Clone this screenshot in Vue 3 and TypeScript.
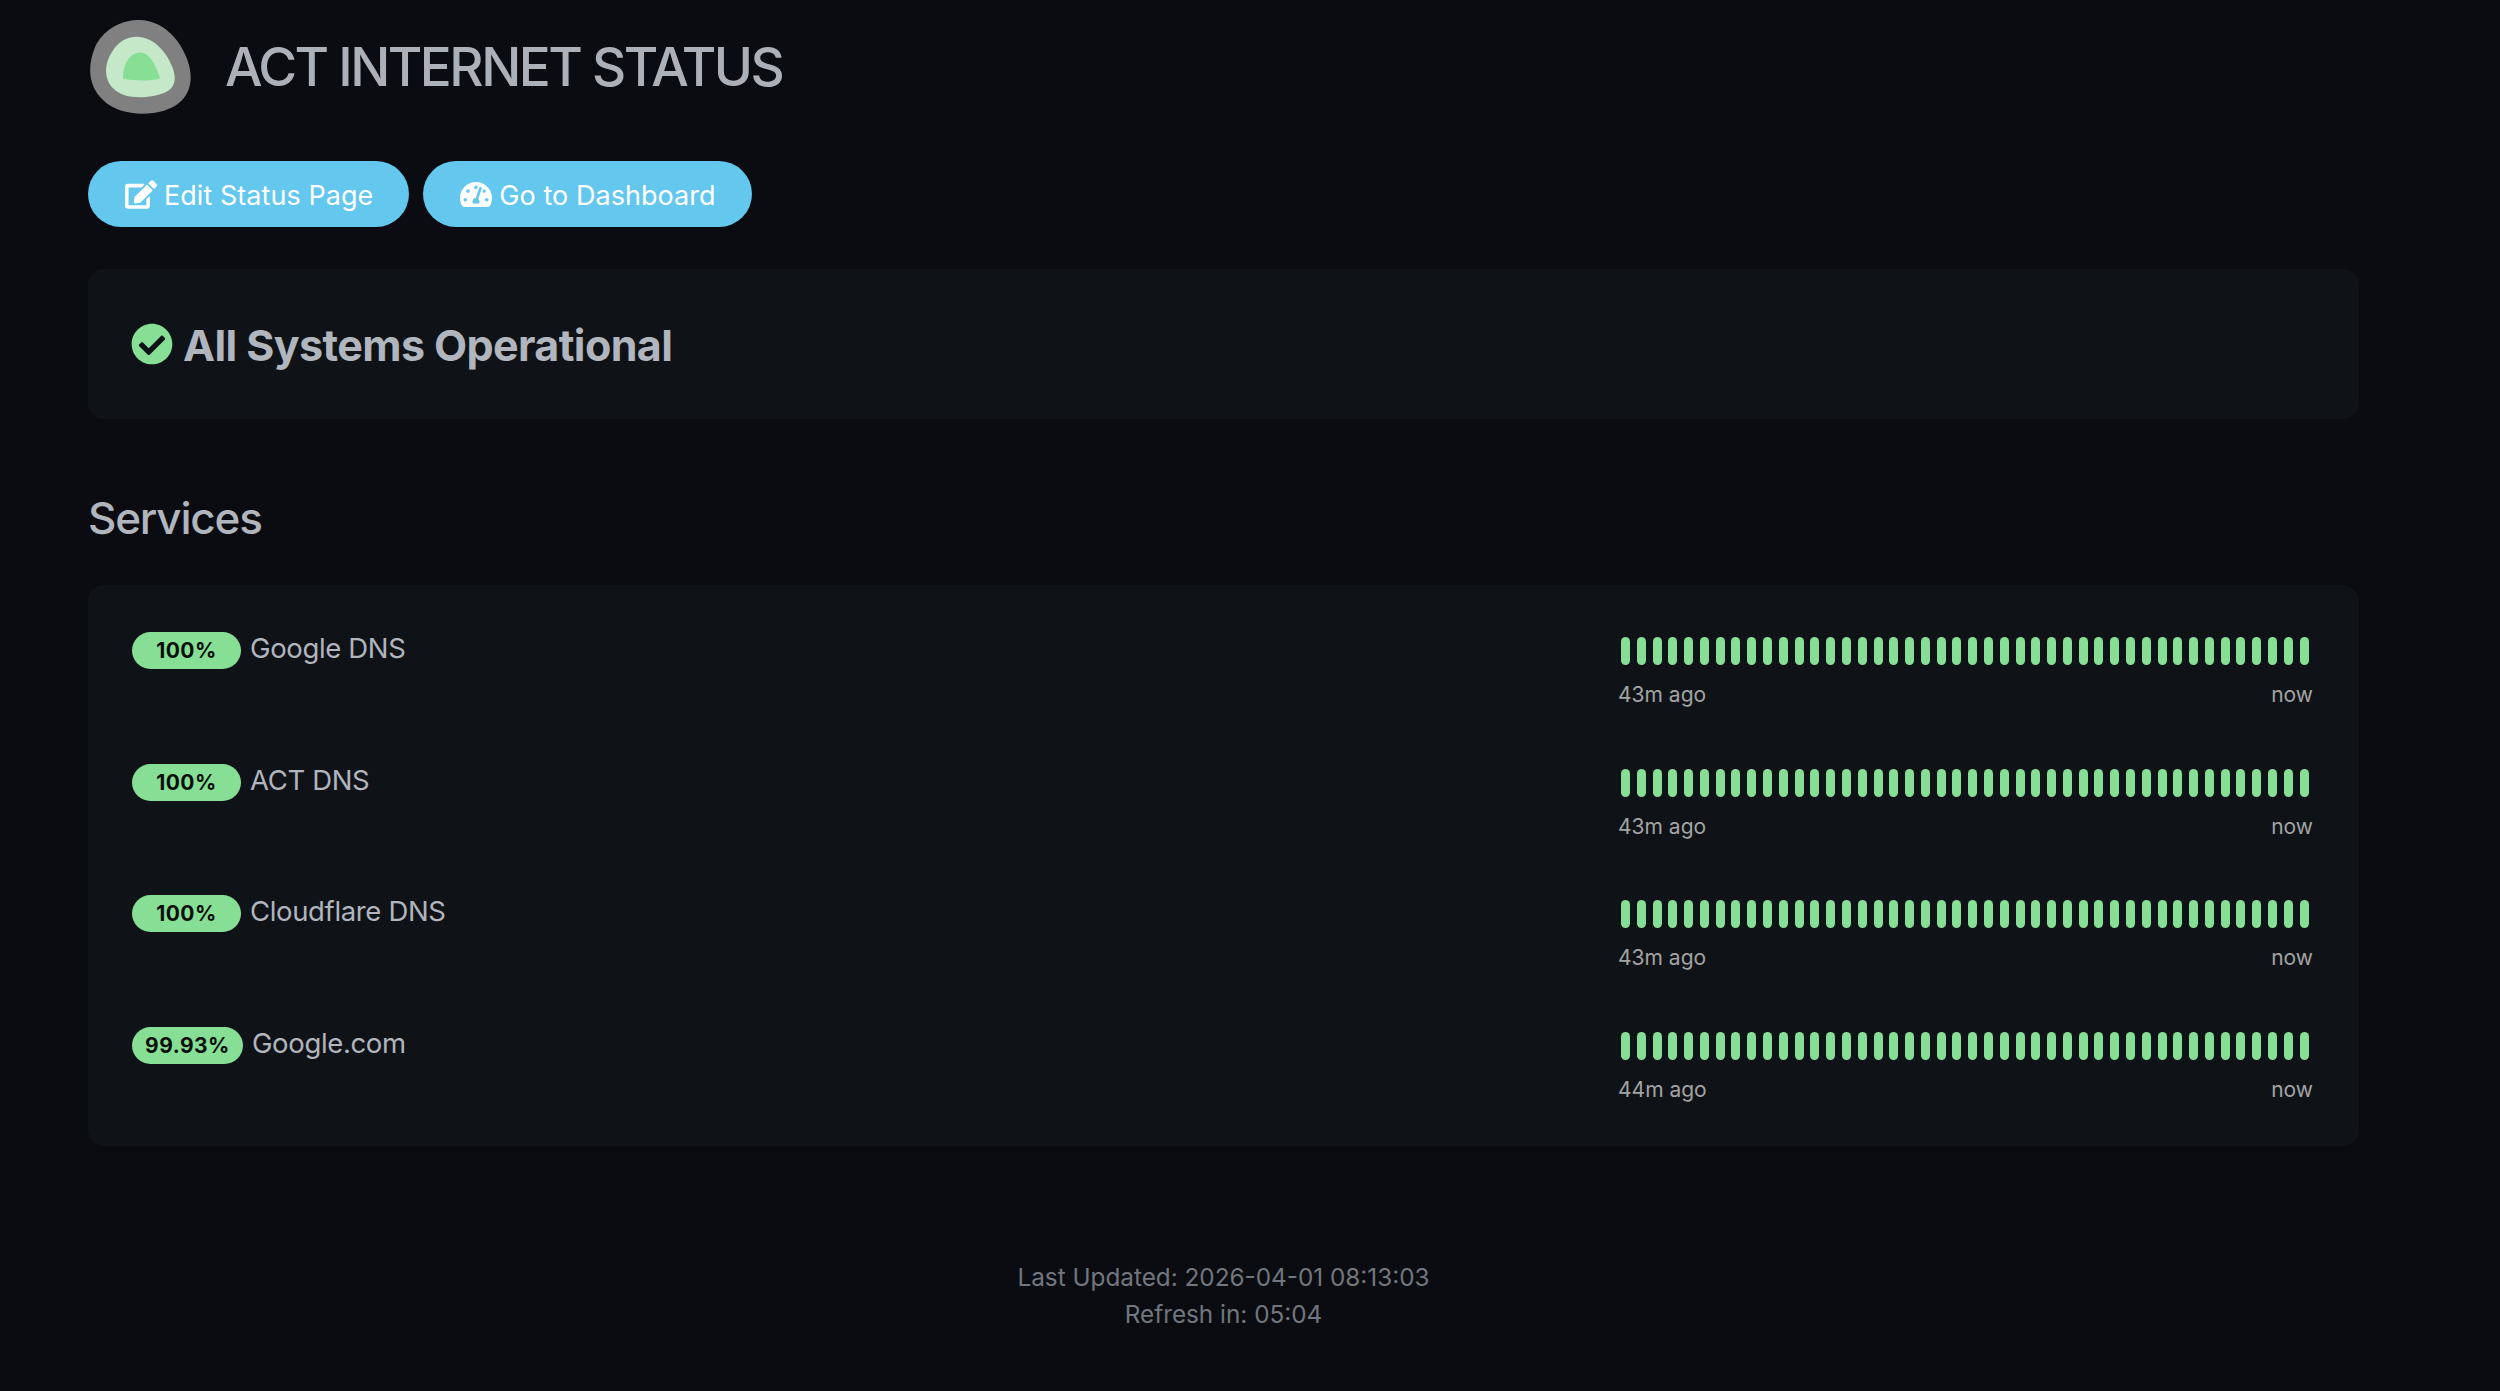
<script setup lang="ts">
interface Service {
  name: string;
  uptime: string;
  since: string;
}

const services: Service[] = [
  { name: 'Google DNS', uptime: '100%', since: '43m ago' },
  { name: 'ACT DNS', uptime: '100%', since: '43m ago' },
  { name: 'Cloudflare DNS', uptime: '100%', since: '43m ago' },
  { name: 'Google.com', uptime: '99.93%', since: '44m ago' },
];

const beatCount = 44;
</script>

<template>
  <div class="page">
    <header class="title-row">
      <svg class="logo" viewBox="30 30 303 280">
        <path fill="#808080" d="M170 30C240 28 295 80 320 150C345 220 320 280 250 300C190 318 110 310 70 270C25 230 20 170 45 110C65 65 115 32 170 30Z" />
        <path fill="#c5e8c9" d="M165 80C215 78 255 120 275 170C295 225 270 245 225 255C180 265 125 262 100 235C70 205 72 160 95 125C115 95 135 82 165 80Z" />
        <path fill="#87df95" d="M180 127C205 127 225 160 238 204C205 212 165 212 128 205C127 165 145 128 180 127Z" />
      </svg>
      <h1 class="title">ACT INTERNET STATUS</h1>
    </header>

    <div class="actions">
      <button class="btn">
        <svg class="btn-icon" viewBox="0 0 576 512">
          <path fill="currentColor" d="M402.6 83.2l90.2 90.2c3.8 3.8 3.8 10 0 13.8L274.4 405.6l-92.8 10.3c-12.4 1.4-22.9-9.1-21.5-21.5l10.3-92.8L388.8 83.2c3.8-3.8 10-3.8 13.8 0zm162-22.9l-48.8-48.8c-15.2-15.2-39.9-15.2-55.2 0l-35.4 35.4c-3.8 3.8-3.8 10 0 13.8l90.2 90.2c3.8 3.8 10 3.8 13.8 0l35.4-35.4c15.2-15.3 15.2-40 0-55.2zM384 346.2V448H64V128h229.8c3.2 0 6.2-1.3 8.5-3.5l40-40c7.6-7.6 2.2-20.5-8.5-20.5H48C21.5 64 0 85.5 0 112v352c0 26.5 21.5 48 48 48h352c26.5 0 48-21.5 48-48V306.2c0-10.7-12.9-16-20.5-8.5l-40 40c-2.2 2.3-3.5 5.3-3.5 8.5z" />
        </svg>
        Edit Status Page
      </button>
      <button class="btn">
        <svg class="btn-icon" viewBox="0 0 576 512">
          <path fill="currentColor" d="M288 32C128.94 32 0 160.94 0 320c0 52.8 14.25 102.26 39.06 144.8 5.61 9.62 16.3 15.2 27.44 15.2h443c11.14 0 21.83-5.58 27.44-15.2C561.75 422.26 576 372.8 576 320c0-159.06-128.94-288-288-288zm0 64c14.71 0 26.58 10.13 30.32 23.65-1.11 2.26-2.64 4.23-3.45 6.67l-9.22 27.67c-5.13 3.49-10.97 6.01-17.64 6.01-17.67 0-32-14.33-32-32S270.33 96 288 96zM96 384c-17.67 0-32-14.33-32-32s14.33-32 32-32 32 14.33 32 32-14.33 32-32 32zm48-160c-17.67 0-32-14.33-32-32s14.33-32 32-32 32 14.33 32 32-14.33 32-32 32zm246.77-72.41l-61.33 184C343.13 347.33 352 364.54 352 384c0 11.72-3.38 22.55-8.88 32H232.88c-5.5-9.45-8.88-20.28-8.88-32 0-33.94 26.5-61.43 59.9-63.59l61.34-184.01c4.17-12.56 17.73-19.45 30.36-15.17 12.57 4.19 19.35 17.77 15.17 30.36zm14.66 57.2l15.52-46.55c3.47-1.29 7.13-2.23 11.05-2.23 17.67 0 32 14.33 32 32s-14.33 32-32 32c-11.38-.01-20.89-6.28-26.57-15.22zM480 384c-17.67 0-32-14.33-32-32s14.33-32 32-32 32 14.33 32 32-14.33 32-32 32z" />
        </svg>
        Go to Dashboard
      </button>
    </div>

    <section class="card overall">
      <svg class="ok-icon" viewBox="0 0 512 512">
        <path fill="#87df95" d="M504 256c0 136.967-111.033 248-248 248S8 392.967 8 256 119.033 8 256 8s248 111.033 248 248zM227.314 387.314l184-184c6.248-6.248 6.248-16.379 0-22.627l-22.627-22.627c-6.248-6.249-16.379-6.249-22.628 0L216 308.118l-70.059-70.059c-6.248-6.248-16.379-6.248-22.628 0l-22.627 22.627c-6.248 6.248-6.248 16.379 0 22.627l104 104c6.249 6.249 16.379 6.249 22.628.001z" />
      </svg>
      <span class="overall-text">All Systems Operational</span>
    </section>

    <h2 class="section-title">Services</h2>

    <section class="card services">
      <div v-for="s in services" :key="s.name" class="row">
        <div class="info">
          <span class="badge">{{ s.uptime }}</span>
          <span class="name">{{ s.name }}</span>
        </div>
        <div class="history">
          <div class="beats">
            <span v-for="n in beatCount" :key="n" class="beat"></span>
          </div>
          <div class="times">
            <span>{{ s.since }}</span>
            <span>now</span>
          </div>
        </div>
      </div>
    </section>

    <footer class="footer">
      <div>Last Updated: 2026-04-01 08:13:03</div>
      <div>Refresh in: 05:04</div>
    </footer>
  </div>
</template>

<style>
html,
body {
  margin: 0;
  background: #0a0c11;
}
</style>

<style scoped>
.page {
  box-sizing: border-box;
  width: 2500px;
  height: 1391px;
  overflow: hidden;
  padding: 20px 141px 0 88px;
  background: #0a0c11;
  color: #b1b5bd;
  font-family: Inter, "Liberation Sans", sans-serif;
}

.title-row {
  display: flex;
  align-items: center;
  height: 93px;
}

.logo {
  flex: none;
  width: 102px;
  height: 94px;
  margin-left: 2px;
}

.title {
  margin: 2px 0 0 33px;
  font-size: 53px;
  font-weight: 500;
  line-height: 1;
  letter-spacing: -2.5px;
  color: #acb0b9;
}

.actions {
  display: flex;
  gap: 14px;
  margin-top: 48px;
}

.btn {
  display: flex;
  align-items: center;
  gap: 7px;
  height: 66px;
  padding: 2px 36px 0 37px;
  border: 0;
  border-radius: 33px;
  background: #63c7ee;
  color: #fff;
  font-family: inherit;
  font-size: 27px;
  letter-spacing: 0.05px;
}

.btn-icon {
  width: 32px;
  height: 29px;
  margin-top: -2px;
}

.card {
  background: #0f1318;
  border-radius: 16px;
}

.overall {
  display: flex;
  align-items: center;
  gap: 10px;
  height: 150px;
  margin-top: 42px;
  padding: 0 43px;
  font-size: 43px;
  font-weight: 700;
  letter-spacing: -0.6px;
}

.overall-text {
  margin-top: 2px;
}

.ok-icon {
  width: 42px;
  height: 42px;
}

.section-title {
  margin: 70px 0 0;
  font-size: 44px;
  line-height: 58px;
  font-weight: 500;
  letter-spacing: -1.2px;
}

.services {
  margin-top: 38px;
  padding: 18px 46px 17px 44px;
}

.row {
  display: flex;
  justify-content: space-between;
  box-sizing: border-box;
  height: 131.5px;
  padding-top: 29px;
}

.info {
  display: flex;
  align-items: flex-start;
  gap: 9px;
}

.badge {
  box-sizing: border-box;
  height: 37px;
  min-width: 109px;
  padding: 0 13px;
  border-radius: 19px;
  background: #87df95;
  color: #0a0f0b;
  font-size: 21px;
  font-weight: 700;
  line-height: 37px;
  text-align: center;
  letter-spacing: 0.5px;
}

.name {
  font-size: 27.5px;
  line-height: 32px;
  letter-spacing: -0.35px;
}

.history {
  width: 695px;
}

.beats {
  display: flex;
  justify-content: space-between;
  padding: 5px 4px 0 3px;
}

.beat {
  width: 9px;
  height: 28px;
  border-radius: 5px;
  background: #87df95;
}

.times {
  display: flex;
  justify-content: space-between;
  margin-top: 17px;
  font-size: 21px;
  line-height: 25px;
  color: #a3a3a3;
}

.footer {
  margin-top: 113px;
  font-size: 24.3px;
  line-height: 37px;
  text-align: center;
  color: #72767e;
}
</style>
